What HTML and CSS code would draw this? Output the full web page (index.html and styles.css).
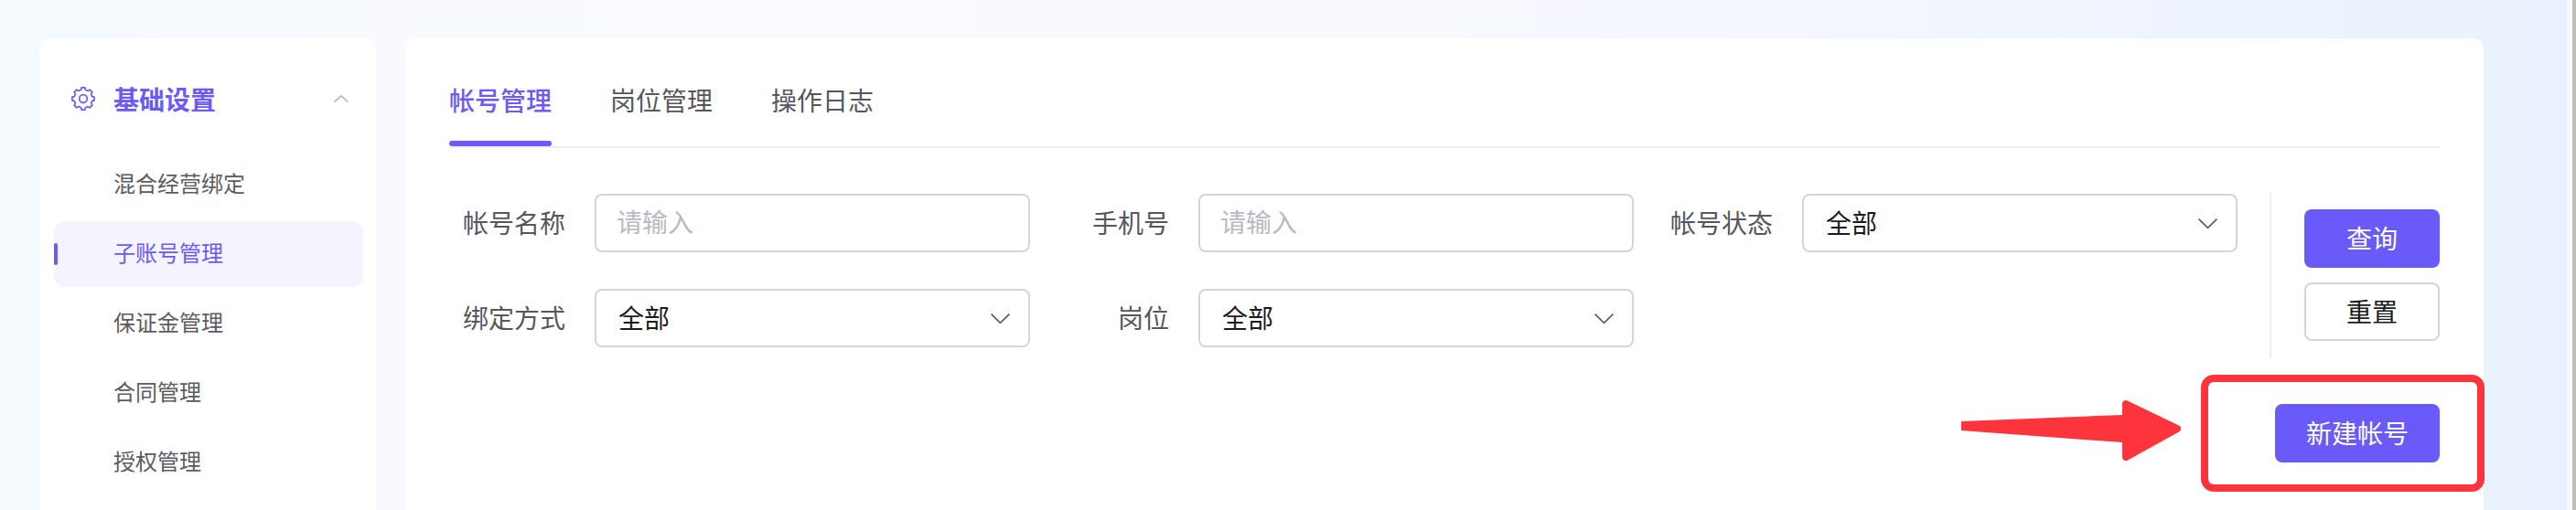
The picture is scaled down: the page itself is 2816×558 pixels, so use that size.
FILE: index.html
```html
<!DOCTYPE html>
<html lang="zh-CN">
<head>
<meta charset="utf-8">
<title>子账号管理</title>
<link rel="stylesheet" href="styles.css">
</head>
<body>
<div class="page">
  <div class="content">
    <aside class="sidebar">
      <div class="menu-head">
        <svg class="gear" viewBox="0 0 26 26" fill="none" stroke="currentColor" stroke-width="1.7" stroke-linejoin="round">
          <path d="M10.58 3.3 11.09.95h3.82l.51 2.35 2.73 1.13 2.02-1.3 2.7 2.7-1.3 2.02 1.13 2.73 2.35.51v3.82l-2.35.51-1.13 2.73 1.3 2.02-2.7 2.7-2.02-1.3-2.73 1.13-.51 2.35h-3.82l-.51-2.35-2.73-1.13-2.02 1.3-2.7-2.7 1.3-2.02-1.13-2.73-2.35-.51v-3.82l2.35-.51 1.13-2.73-1.3-2.02 2.7-2.7 2.02 1.3z"/>
          <circle cx="13" cy="13" r="4.3"/>
        </svg>
        <span class="menu-title">基础设置</span>
        <svg class="caret-up" viewBox="0 0 16 8" fill="none" stroke="currentColor" stroke-width="1.6"><path d="M.6 7.600 8 1l7.400 6.600"/></svg>
      </div>
      <ul class="menu">
        <li class="menu-item">混合经营绑定</li>
        <li class="menu-item active">子账号管理</li>
        <li class="menu-item">保证金管理</li>
        <li class="menu-item">合同管理</li>
        <li class="menu-item">授权管理</li>
      </ul>
    </aside>
    <main class="card">
      <nav class="tabs">
        <span class="tab active">帐号管理</span>
        <span class="tab">岗位管理</span>
        <span class="tab">操作日志</span>
      </nav>
      <section class="filter">
        <div class="fields">
          <div class="field"><label class="label">帐号名称</label><div class="control placeholder">请输入</div></div>
          <div class="field"><label class="label">手机号</label><div class="control placeholder">请输入</div></div>
          <div class="field"><label class="label">帐号状态</label><div class="control">全部<svg class="caret" viewBox="0 0 21 11" fill="none" stroke="currentColor" stroke-width="1.7"><path d="M.6.6l9.900 9.700L20.400.6"/></svg></div></div>
          <div class="field"><label class="label">绑定方式</label><div class="control">全部<svg class="caret" viewBox="0 0 21 11" fill="none" stroke="currentColor" stroke-width="1.7"><path d="M.6.6l9.900 9.700L20.400.6"/></svg></div></div>
          <div class="field"><label class="label">岗位</label><div class="control">全部<svg class="caret" viewBox="0 0 21 11" fill="none" stroke="currentColor" stroke-width="1.7"><path d="M.6.6l9.900 9.700L20.400.6"/></svg></div></div>
        </div>
        <div class="actions">
          <button class="btn primary">查询</button>
          <button class="btn outline">重置</button>
        </div>
      </section>
      <div class="toolbar">
        <button class="btn primary wide">新建帐号</button>
      </div>
    </main>
    <div class="mark-box"></div>
    <svg class="mark-arrow" viewBox="0 0 244 68" fill="#fe343c" stroke="#fe343c" stroke-linejoin="round">
      <path stroke="none" d="M0 24 176 17V47L0 34z"/>
      <path stroke-width="8" d="M180 5 236 32 180 63z"/>
    </svg>
  </div>
  <div class="scrollbar"><div class="scroll-thumb"></div></div>
</div>
</body>
</html>
```
FILE: styles.css
```css
* { box-sizing: border-box; }
html, body { margin: 0; height: 100%; overflow: hidden; }
body { font-family: "Noto Sans CJK SC", "Noto Sans", sans-serif; color: #1a1a20; background: #fff; }
.page { display: flex; width: 2816px; height: 558px; overflow: hidden; }
.content {
  position: relative;
  flex: 1;
  display: flex;
  gap: 32px;
  padding: 42px 90px 0 43px;
  background: linear-gradient(90deg, #f5faff 0%, #fafaff 25%, #f9f9ff 55%, #e8f1fd 100%);
}
.scrollbar { display: flex; justify-content: flex-end; width: 11px; background: #f8f8f8; border-left: 1px solid #ececec; }
.scroll-thumb { width: 4px; background: #bdbdbd; }

.sidebar { flex: 0 0 368px; height: 560px; padding: 30px 14px 0 16px; background: #fff; border-radius: 10px 10px 0 0; }
.menu-head { display: flex; align-items: center; height: 72px; padding-left: 19px; color: #6a5afa; }
.gear { width: 26px; height: 26px; margin-right: 20px; }
.menu-title { flex: 1; font-size: 28px; font-weight: 700; line-height: 40px; }
.caret-up { width: 16px; height: 8px; margin-right: 16px; color: #b4b4b4; }
.menu { list-style: none; margin: 22px 0 0; padding: 0; display: flex; flex-direction: column; gap: 4px; }
.menu-item { position: relative; height: 72px; padding-left: 65px; font-size: 24px; line-height: 67px; color: #5a5b63; border-radius: 12px; }
.menu-item.active { color: #6a5afa; background: #f5f4fe; }
.menu-item.active::before { content: ""; position: absolute; left: 0; top: 24px; width: 4px; height: 24px; border-radius: 2px; background: #6a5afa; }

.card { flex: 1; height: 560px; padding: 0 48px; background: #fff; border-radius: 10px 10px 0 0; }
.tabs { display: flex; gap: 64px; padding-top: 46px; border-bottom: 2px solid #eeeef2; height: 120px; }
.tab { position: relative; width: 112px; height: 72px; font-size: 28px; line-height: 42px; color: #55565e; white-space: nowrap; }
.tab.active { color: #6a5afa; font-weight: 500; }
.tab.active::after { content: ""; position: absolute; left: 0; right: 0; bottom: 0; height: 6px; border-radius: 3px; background: #6a5afa; }

.filter { display: flex; margin-top: 48px; height: 182px; }
.fields { display: grid; grid-template-columns: repeat(3, 635px); column-gap: 25px; row-gap: 40px; align-content: start; padding-top: 2px; }
.field { display: flex; align-items: center; gap: 32px; }
.label { width: 127px; padding-bottom: 2px; font-size: 28px; line-height: 40px; text-align: right; color: #55565e; white-space: nowrap; }
.control { display: flex; align-items: center; justify-content: space-between; width: 476px; height: 64px; padding: 0 20px 3px 24px; font-size: 28px; color: #1a1a20; background: #fff; border: 2px solid #d4d4dc; border-radius: 8px; }
.caret { width: 21px; height: 11px; margin-top: 3px; color: #5c5c64; }
.placeholder { padding-left: 22px; padding-bottom: 4px; color: #b8b9c2; }
.actions { display: flex; flex-direction: column; gap: 16px; width: 186px; margin-left: 35px; padding: 19px 0 0 36px; border-left: 2px solid #eeeef2; }
.btn { display: block; width: 148px; height: 64px; padding: 0 0 3px; font: inherit; font-size: 28px; line-height: 1; border-radius: 8px; }
.primary { color: #fff; background: #6a5afa; border: 0; }
.outline { color: #1a1a20; background: #fff; border: 2px solid #d4d4dc; }
.wide { width: 180px; }
.toolbar { display: flex; justify-content: flex-end; margin-top: 50px; }

.mark-box { position: absolute; left: 2406px; top: 410px; width: 310px; height: 128px; border: 8px solid #fe343c; border-radius: 14px; }
.mark-arrow { position: absolute; left: 2144px; top: 437px; width: 244px; height: 68px; }
```
